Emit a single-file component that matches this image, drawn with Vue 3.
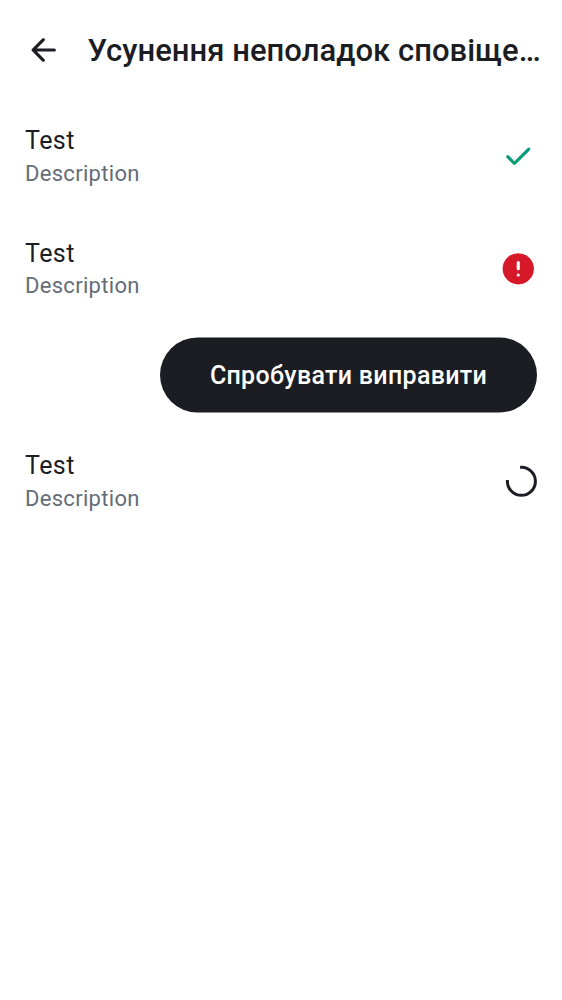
<script setup>
const title = 'Усунення неполадок сповіще…'
</script>

<template>
  <main class="screen">
    <header class="bar">
      <svg class="back" viewBox=".25 -.15 24.32 24.32"><path d="m7.83 13 4.9 4.9a.92.92 0 0 1 .29.7 1.03 1.03 0 0 1-.32.7.98.98 0 0 1-.7.28.96.96 0 0 1-.7-.28l-6.6-6.6a.88.88 0 0 1-.21-.32A1.1 1.1 0 0 1 4.43 12a1.1 1.1 0 0 1 .06-.38.88.88 0 0 1 .21-.32l6.6-6.6a.93.93 0 0 1 .69-.27c.27 0 .51.09.71.27.2.2.3.44.3.71 0 .28-.1.52-.3.71L7.83 11H19a.96.96 0 0 1 1 1 .96.96 0 0 1-1 1z" /></svg>
      <h1>{{ title }}</h1>
    </header>
    <section class="item">
      <div class="text"><p class="name">Test</p><p class="desc">Description</p></div>
      <svg class="icon" viewBox="-.32 -.32 24.32 24.32"><path fill="#079b78" d="m9.55 15.15 8.48-8.47a.97.97 0 0 1 .71-.3.97.97 0 0 1 .71.3.97.97 0 0 1 .3.71.97.97 0 0 1-.3.71l-9.2 9.2a.96.96 0 0 1-.7.3.96.96 0 0 1-.7-.3l-4.3-4.3a.93.93 0 0 1-.29-.71 1 1 0 0 1 .31-.71.97.97 0 0 1 .72-.3c.27 0 .51.1.71.3z" /></svg>
    </section>
    <section class="item">
      <div class="text"><p class="name">Test</p><p class="desc">Description</p></div>
      <svg class="icon" viewBox="-.32 0 24.32 24.32"><circle cx="12" cy="12" r="10" fill="#d51928" /><path d="M12 8v4" stroke="#fff" stroke-width="2" stroke-linecap="round" /><circle cx="12" cy="16" r="1" fill="#fff" /></svg>
    </section>
    <div class="actions">
      <button>
        <svg class="pill" viewBox="0 0 377 76"><rect y=".5" width="377" height="75" rx="37.5" fill="#1b1d22" /></svg>
        <span>Спробувати виправити</span>
      </button>
    </div>
    <section class="item">
      <div class="text"><p class="name">Test</p><p class="desc">Description</p></div>
      <svg class="spinner" viewBox="0 0 32 32"><path d="M16.6 2.3A14 14 0 1 1 2.4 16.4" fill="none" stroke="#1b1d22" stroke-width="3" stroke-linecap="square" /></svg>
    </section>
  </main>
</template>

<style scoped>
.screen { height: 1000px; background: #fff; color: #1b1d22; font-family: Roboto, sans-serif; overflow: hidden; }
.bar { height: 100px; display: flex; align-items: center; padding-left: 25px; gap: 24.5px; box-sizing: border-box; }
.back { width: 38px; height: 38px; flex: none; }
.back path { fill: #1b1d22; }
h1 { margin: 1px 0 0; font-size: 31px; line-height: 40px; font-weight: 500; letter-spacing: .03px; white-space: nowrap; }
.item { height: 112.5px; display: flex; align-items: center; justify-content: space-between; padding: 0 25px; }
.text { padding-bottom: 2.4px; }
p { margin: 0; }
.name { font-size: 25px; line-height: 37px; letter-spacing: .45px; }
.desc { margin-top: -.6px; font-size: 22px; line-height: 29px; letter-spacing: .3px; color: #656d77; }
.icon { width: 38px; height: 38px; }
.actions { height: 100px; display: flex; justify-content: flex-end; align-items: center; padding-right: 25px; }
button { position: relative; width: 377px; height: 76px; border: 0; padding: 0; background: none; color: #fff; font: 500 25px/37px Roboto, sans-serif; letter-spacing: .31px; }
.pill { position: absolute; inset: 0; width: 377px; height: 76px; }
button span { position: relative; }
.spinner { width: 32px; height: 32px; }
</style>

<style>
html, body { background: #fff; }
</style>
